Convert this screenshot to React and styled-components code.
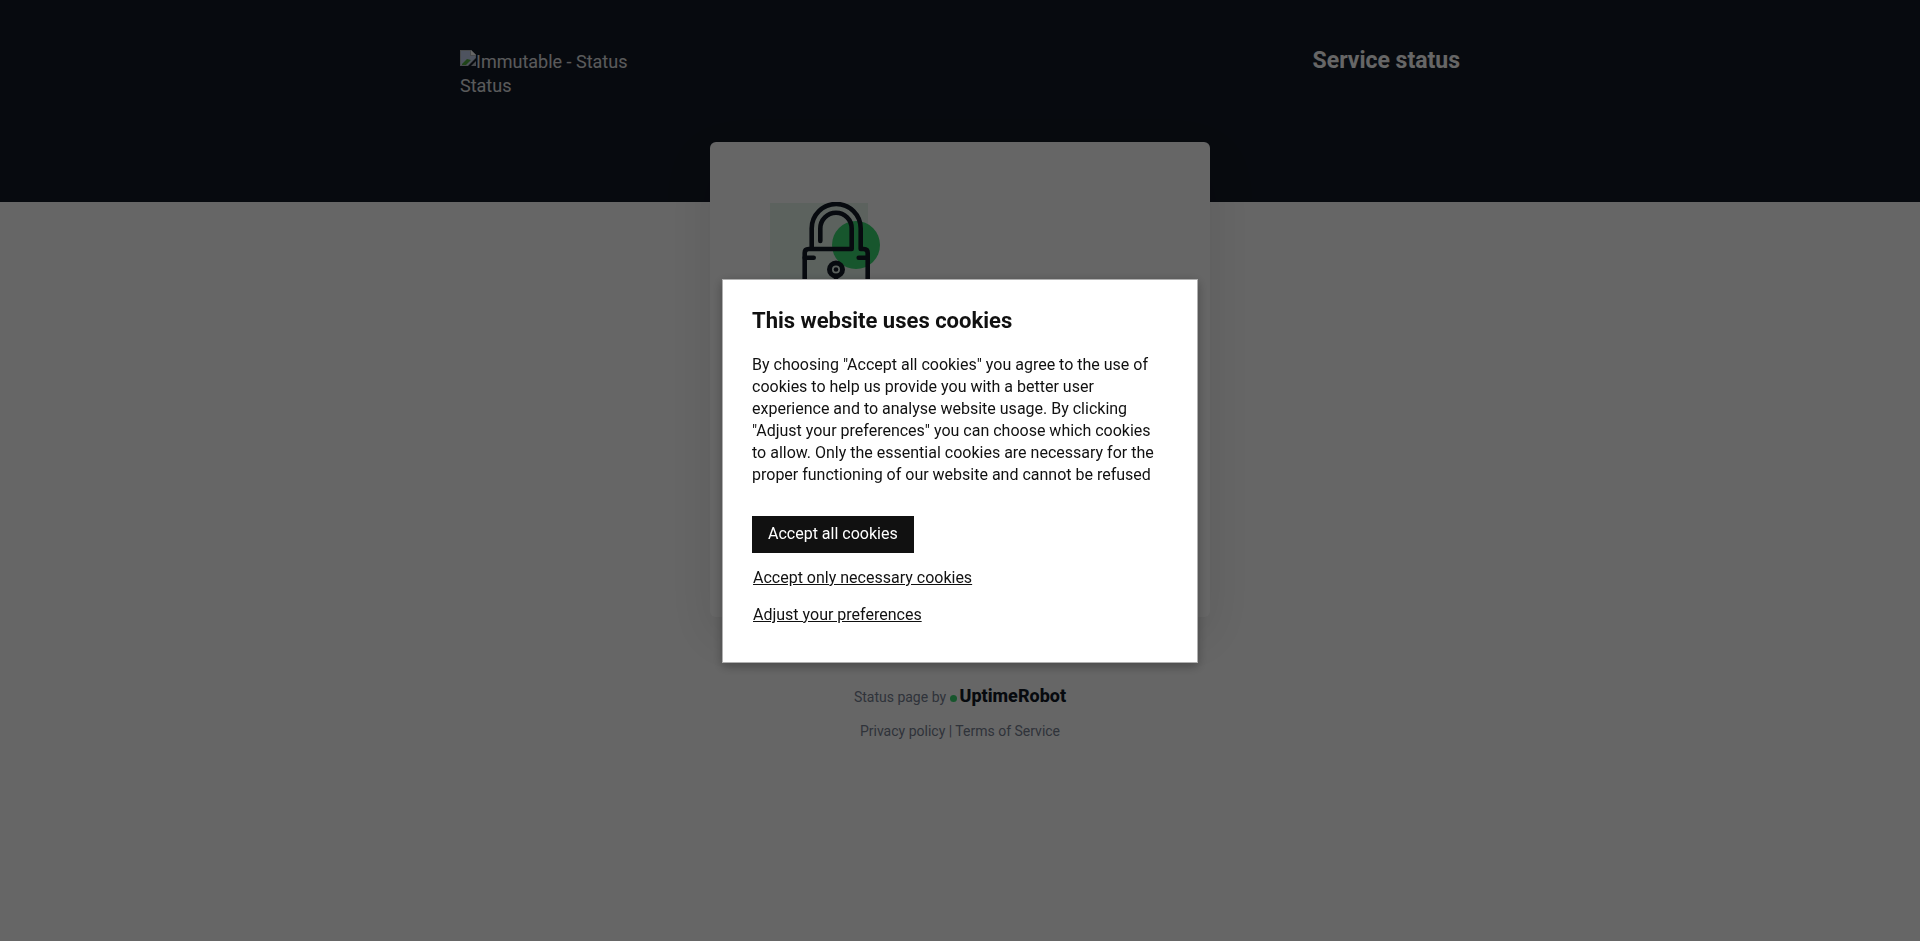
import React from "react";
import styled, { createGlobalStyle } from "styled-components";

const GlobalStyle = createGlobalStyle`
  *, *::before, *::after { box-sizing: border-box; }
  body {
    margin: 0;
    background: #ffffff;
    color: #131a26;
    font-family: Roboto, "Liberation Sans", sans-serif;
    font-size: 14px;
  }
`;

const Page = styled.div`
  min-height: 100vh;
`;

const Header = styled.header`
  height: 202px;
  padding: 48px 20px 0;
  background: #131a26;
  color: #ffffff;
`;

const HeaderInner = styled.div`
  display: flex;
  justify-content: space-between;
  align-items: flex-start;
  max-width: 1000px;
  margin: 0 auto;
`;

const Logo = styled.a`
  width: 200px;
  padding-top: 2px;
  color: #e0e2e4;
  font-size: 18px;
  line-height: 24px;
  text-decoration: none;

  svg { vertical-align: top; }
`;

const PageTitle = styled.h1`
  margin: 0;
  font-size: 23px;
  line-height: 26px;
  font-weight: 700;
`;

const Main = styled.main`
  width: 100%;
  max-width: 500px;
  margin: -60px auto 0;
`;

const Card = styled.section`
  min-height: 475px;
  padding: 60px;
  background: #ffffff;
  border-radius: 6px;
  box-shadow: 0 20px 50px rgba(0, 0, 0, 0.1);
`;

const Footer = styled.footer`
  padding: 66px 20px 40px;
  text-align: center;
  color: #768092;
  font-size: 14px;
  line-height: 26px;
`;

const FooterLine = styled.p`
  margin: 0 0 8px;
`;

const FooterLink = styled.a`
  color: inherit;
  text-decoration: none;
`;

const Brand = styled.a`
  color: #131a26;
  font-size: 18px;
  font-weight: 800;
  text-decoration: none;
`;

const Dot = styled.span`
  display: inline-block;
  width: 7px;
  height: 7px;
  margin-right: 3px;
  border-radius: 50%;
  background: #3bd671;
`;

const Overlay = styled.div`
  position: fixed;
  inset: 0;
  display: grid;
  place-items: center;
  background: rgba(0, 0, 0, 0.6);
`;

const Dialog = styled.section`
  width: 476px;
  max-width: 100%;
  padding: 27px 29px 28px;
  border: 1px solid #b0b0b0;
  background: #ffffff;
  color: #111111;
  box-shadow: 0 3px 10px rgba(0, 0, 0, 0.3);
`;

const DialogTitle = styled.h2`
  margin: 0 0 19px;
  font-size: 22px;
  line-height: 28px;
  font-weight: 700;
`;

const DialogText = styled.p`
  margin: 0 0 30px;
  font-size: 16px;
  line-height: 22px;
`;

const Actions = styled.div`
  display: flex;
  flex-direction: column;
  align-items: flex-start;
`;

const ActionButton = styled.button`
  height: 37px;
  padding: 0 ${(p) => (p.$primary ? "16px" : "1px")};
  margin-bottom: ${(p) => (p.$primary ? "7px" : "0")};
  border: 0;
  background: ${(p) => (p.$primary ? "#111111" : "transparent")};
  color: ${(p) => (p.$primary ? "#ffffff" : "#111111")};
  font-family: inherit;
  font-size: 16px;
  line-height: 22px;
  text-decoration: ${(p) => (p.$primary ? "none" : "underline")};
  cursor: pointer;
`;

function BrokenImage() {
  return (
    <svg width="16" height="16" viewBox="0 0 16 16" aria-hidden="true">
      <path d="M0 0h11l5 5v3L8 16H0z" fill="#b4b8bd" />
      <path d="M1 1h9v5h5v2l-7 7H1z" fill="#c3cfee" />
      <path d="M11 0l5 5h-5z" fill="#ffffff" />
      <path d="M2 14l5-5 4 1-5 5H2z" fill="#4fa83d" />
      <path d="M16 11v5h-5z" fill="#b4b8bd" />
    </svg>
  );
}

function Padlock() {
  return (
    <svg width="112" height="116" viewBox="0 0 112 116" aria-hidden="true">
      <rect y="1" width="98" height="98" fill="#e6f5ec" />
      <circle cx="86" cy="43" r="24" fill="#3bd671" />
      <g fill="none" stroke="#131a26" strokeWidth="4.6" strokeLinecap="round" strokeLinejoin="round">
        <path d="M41.700 47V26.500a24.500 24.500 0 0 1 49 0V47H93.700q4 0 4 4v58H34.700V51q0-4 4-4H81.700V26.500a15.700 15.700 0 0 0-31.400 0V39" />
        <path d="M34.700 55.800h9M88.700 55.800h9M66 74v12" />
        <circle cx="66" cy="67.500" r="6.500" strokeWidth="5" />
      </g>
      <circle cx="66" cy="67.500" r="2.300" fill="#131a26" />
    </svg>
  );
}

export default function App() {
  return (
    <>
      <GlobalStyle />
      <Page>
        <Header>
          <HeaderInner>
            <Logo href="#"><BrokenImage />Immutable - Status Status</Logo>
            <PageTitle>Service status</PageTitle>
          </HeaderInner>
        </Header>
        <Main>
          <Card><Padlock /></Card>
        </Main>
        <Footer>
          <FooterLine>
            Status page by <Brand href="#"><Dot />UptimeRobot</Brand>
          </FooterLine>
          <FooterLine>
            <FooterLink href="#">Privacy policy</FooterLink> | <FooterLink href="#">Terms of Service</FooterLink>
          </FooterLine>
        </Footer>
      </Page>
      <Overlay>
        <Dialog role="dialog" aria-modal="true" aria-labelledby="cookie-title">
          <DialogTitle id="cookie-title">This website uses cookies</DialogTitle>
          <DialogText>
            By choosing "Accept all cookies" you agree to the use of cookies to help us provide you
            with a better user experience and to analyse website usage. By clicking "Adjust your
            preferences" you can choose which cookies to allow. Only the essential cookies are
            necessary for the proper functioning of our website and cannot be refused
          </DialogText>
          <Actions>
            <ActionButton type="button" $primary>Accept all cookies</ActionButton>
            <ActionButton type="button">Accept only necessary cookies</ActionButton>
            <ActionButton type="button">Adjust your preferences</ActionButton>
          </Actions>
        </Dialog>
      </Overlay>
    </>
  );
}
